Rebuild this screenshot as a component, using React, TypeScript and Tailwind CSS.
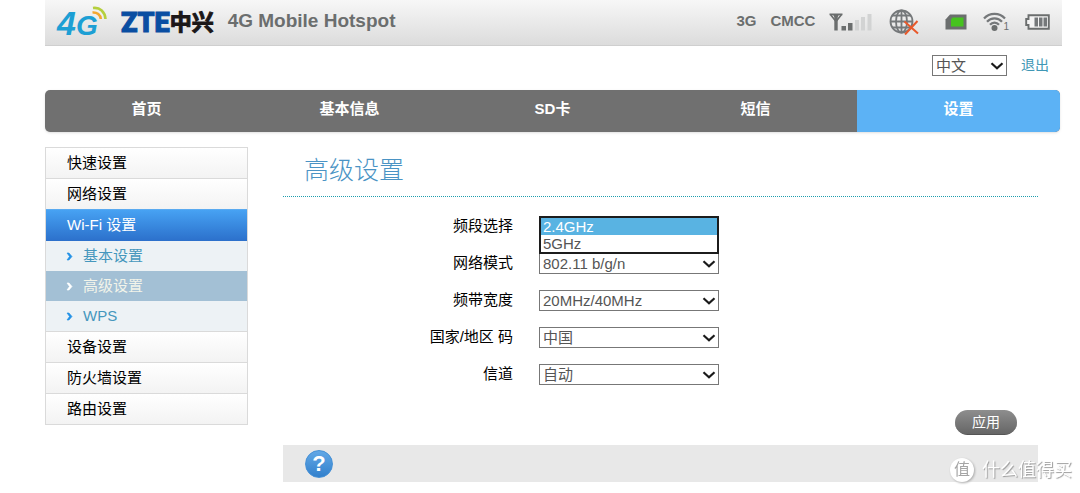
import React, { useState } from 'react';
import clsx from 'clsx';

interface MenuItem {
  label: string;
  children?: string[];
}

interface Field {
  id: string;
  label: string;
  options: string[];
}

const NAV = ['首页', '基本信息', 'SD卡', '短信', '设置'];

const MENU: MenuItem[] = [
  { label: '快速设置' },
  { label: '网络设置' },
  { label: 'Wi-Fi 设置', children: ['基本设置', '高级设置', 'WPS'] },
  { label: '设备设置' },
  { label: '防火墙设置' },
  { label: '路由设置' },
];

const BANDS = ['2.4GHz', '5GHz'];

const FIELDS: Field[] = [
  { id: 'mode', label: '网络模式', options: ['802.11 b/g/n', '802.11 n'] },
  { id: 'bandwidth', label: '频带宽度', options: ['20MHz/40MHz', '20MHz'] },
  { id: 'country', label: '国家/地区 码', options: ['中国'] },
  { id: 'channel', label: '信道', options: ['自动'] },
];

const SelectArrow: React.FC = () => (
  <svg viewBox="0 0 14 8" className="absolute right-[3px] top-[7px] w-[14px] h-2 pointer-events-none" aria-hidden="true">
    <path d="M1.5 1.2 L7 6.3 L12.5 1.2" fill="none" stroke="#1a1a1a" strokeWidth="2.2" />
  </svg>
);

const SignalIcon: React.FC = () => (
  <svg viewBox="0 0 44 18" className="w-11 h-[18px]" aria-label="信号">
    <path d="M0.500 1.300 H13.500 M1.200 1.200 L7 8.500 L12.800 1.200 M4.500 1.200 L7 4.500 L9.500 1.200" fill="none" stroke="#6b6e6e" strokeWidth="1.700" />
    <path d="M7 1 V17.500" stroke="#6b6e6e" strokeWidth="3.400" />
    <path d="M12.500 13h4.500v4.500h-4.500z M19 10h4.500v7.500h-4.500z" fill="#6b6e6e" />
    <path d="M26 7h4v10.500h-4z M32 4h4v13.500h-4z M38.500 1h4v16.500h-4z" fill="#d2d3d3" />
  </svg>
);

const GlobeIcon: React.FC = () => (
  <svg viewBox="0 0 30 26" className="w-[30px] h-[26px]" aria-label="网络未连接">
    <g fill="none" stroke="#75787a" strokeWidth="1.800">
      <circle cx="12.500" cy="12.500" r="11" />
      <ellipse cx="12.500" cy="12.500" rx="5.500" ry="11" />
      <path d="M12.500 1.500v22 M1.500 12.500h22 M3.200 6.500h18.600 M3.200 18.500h18.600" />
    </g>
    <path d="M15.500 12.500 L29 24.500 M28.500 12 L16 25.500" stroke="#e8592b" strokeWidth="2" />
  </svg>
);

const SimIcon: React.FC = () => (
  <svg viewBox="0 0 22 16" className="w-[22px] h-4" aria-label="SIM卡">
    <path d="M5 0.500 H21.500 V15.500 H0.500 V5.500 Z" fill="#6b6e6e" />
    <path d="M7.500 3.500 H18.500 V12.500 H6 V5.500 Z" fill="#46c31f" />
  </svg>
);

const WifiIcon: React.FC = () => (
  <svg viewBox="0 0 24 20" className="w-6 h-5" aria-label="Wi-Fi">
    <g fill="none" stroke="#75787a" strokeWidth="2.200">
      <path d="M1 6.500 C6.500 0.300 16.500 0.300 22 6.500" />
      <path d="M4 9.800 C8 5.200 15 5.200 19 9.800" />
      <path d="M7 12.800 C9.500 9.800 13.500 9.800 16 12.800" />
    </g>
    <circle cx="11.500" cy="16" r="3" fill="#6b6e6e" />
  </svg>
);

const BatteryIcon: React.FC = () => (
  <svg viewBox="0 0 25 16" className="w-[25px] h-4" aria-label="电量">
    <path d="M3.500 1.200 H23.800 V14.800 H3.500 V11 H1.200 V5 H3.500 Z" fill="#f4f4f4" stroke="#6b6e6e" strokeWidth="1.900" />
    <path d="M9.500 3.500h3.500v9h-3.500z M14 3.500h3.500v9h-3.500z M18.500 3.500h3.500v9h-3.500z" fill="#75787a" />
  </svg>
);

const Header: React.FC = () => (
  <header className="flex items-center h-[46px] bg-linear-to-b from-[#f7f7f7] to-[#dcdcdc] border-b border-[#cfcfcf] text-[#6b6e6e] font-bold">
    <div className="relative ml-3 w-[50px] pt-1 text-[28px] leading-[34px] italic text-[#1d9fd4]">
      <span className="text-[34px]">4</span>
      <span>G</span>
      <svg viewBox="0 0 16 16" className="absolute right-0 top-1 w-4 h-4" aria-hidden="true">
        <path d="M2 2 C9 1 14 6 14.500 13" fill="none" stroke="#b5cf3d" strokeWidth="2.600" />
        <path d="M1.500 6.500 C6 6 9.500 9 9.800 13" fill="none" stroke="#f3a72f" strokeWidth="2.600" />
      </svg>
    </div>
    <div className="flex items-center ml-[14px] leading-[34px]">
      <span className="font-['Roboto',sans-serif] font-black text-[27px] text-[#0a4ea2] [-webkit-text-stroke:1px_#0a4ea2]">ZTE</span>
      <span className="text-[22px] text-[#1b1718] [-webkit-text-stroke:1px_#1b1718]">中兴</span>
    </div>
    <h1 className="ml-[14px] pb-[2px] text-[19px] whitespace-nowrap">4G Mobile Hotspot</h1>
    <div className="flex items-center ml-auto mr-3 pb-[2px] text-[15px]">
      <span>3G</span>
      <span className="ml-[14px] mr-[14px]">CMCC</span>
      <SignalIcon />
      <span className="ml-4 mr-[26px]"><GlobeIcon /></span>
      <SimIcon />
      <span className="flex items-end ml-4 mr-4">
        <WifiIcon />
        <span className="-ml-1 text-[10px] leading-[10px] font-normal">1</span>
      </span>
      <BatteryIcon />
    </div>
  </header>
);

const Sidebar: React.FC<{ page: string; onSelect: (page: string) => void }> = ({ page, onSelect }) => (
  <aside className="w-[203px] shrink-0 self-start border-x border-b border-[#dadada]">
    {MENU.map((item) => (
      <React.Fragment key={item.label}>
        <a
          href="#"
          className={clsx(
            'block pl-[21px] leading-[29px] border-t bg-linear-to-b',
            item.children
              ? 'h-8 border-[#5aaaf0] from-[#47a2f3] to-[#2c70cb] text-white'
              : 'h-[31px] border-[#dadada] from-white to-[#f3f3f3] text-black'
          )}
        >
          {item.label}
        </a>
        {item.children?.map((child) => (
          <a
            key={child}
            href="#"
            onClick={() => onSelect(child)}
            className={clsx(
              'flex items-center gap-[10px] h-[30px] pl-[20px]',
              child === page ? 'bg-[#a3c0d5] text-[#f2f4ea]' : 'bg-[#edf2f5] text-[#4597bd]'
            )}
          >
            <svg
              viewBox="0 0 7 9"
              className={clsx('w-[7px] h-[9px]', child === page ? 'text-white' : 'text-[#2492e6]')}
              aria-hidden="true"
            >
              <path d="M1 1 H3 L6 4.500 L3 8 H1 L3.500 4.500 Z" fill="currentColor" stroke="currentColor" strokeWidth="0.600" />
            </svg>
            {child}
          </a>
        ))}
      </React.Fragment>
    ))}
  </aside>
);

const selectClass = 'block w-full h-[21px] pl-[3px] pr-5 leading-[19px] appearance-none bg-white border border-[#777] text-[#555] rounded-none';

const App: React.FC = () => {
  const [page, setPage] = useState('高级设置');
  const [band, setBand] = useState('2.4GHz');
  const [open, setOpen] = useState(true);

  const pickBand = (value: string) => {
    setBand(value);
    setOpen(false);
  };

  return (
    <div className="min-h-screen bg-white pl-[45px] pr-[18px] font-['Liberation_Sans','Noto_Sans_CJK_SC',sans-serif] text-[15px]">
      <Header />

      <div className="pr-[2px]">
        <div className="flex justify-end items-center gap-[14px] pt-[9px] pr-[11px]">
          <div className="relative w-[75px]">
            <select aria-label="语言" className={selectClass}>
              <option>中文</option>
              <option>English</option>
            </select>
            <SelectArrow />
          </div>
          <a href="#" className="text-sm leading-[21px] text-[#3f97b5]">退出</a>
        </div>

        <nav className="grid grid-cols-5 mt-[14px] h-[42px] rounded-[5px] overflow-hidden bg-[#707070] shadow-sm">
          {NAV.map((item) => (
            <a
              key={item}
              href="#"
              className={clsx('text-center font-bold text-white leading-[38px]', item === '设置' && 'bg-[#5cb2f5]')}
            >
              {item}
            </a>
          ))}
        </nav>

        <div className="flex mt-[15px]">
          <Sidebar page={page} onSelect={setPage} />

          <main className="flex-1 ml-[35px] mr-[22px]">
            <h2 className="h-[50px] pl-[21px] text-[25px] leading-[46px] font-light text-[#4a93c4] border-b border-dotted border-[#1f9dae]">
              {page}
            </h2>

            <form className="pt-[19px]" onSubmit={(e) => e.preventDefault()}>
              <div className="flex flex-col gap-4">
                <div className="flex items-start gap-[26px]">
                  <label htmlFor="band" className="w-[230px] text-right leading-[19px] text-black">频段选择</label>
                  <div className="relative w-[180px]">
                    <select id="band" value={band} onChange={(e) => pickBand(e.target.value)} className={selectClass}>
                      {BANDS.map((b) => <option key={b}>{b}</option>)}
                    </select>
                    <SelectArrow />
                    {open && (
                      <ul role="listbox" aria-label="频段选择" className="absolute left-0 top-0 z-10 w-full bg-white border-2 border-[#1c1c1c]">
                        {BANDS.map((b) => (
                          <li
                            key={b}
                            role="option"
                            aria-selected={b === band}
                            onClick={() => pickBand(b)}
                            className={clsx('pl-[2px] leading-[17px]', b === band ? 'bg-[#59b3e2] text-white' : 'text-[#555]')}
                          >
                            {b}
                          </li>
                        ))}
                      </ul>
                    )}
                  </div>
                </div>

                {FIELDS.map((field) => (
                  <div key={field.id} className="flex items-start gap-[26px]">
                    <label htmlFor={field.id} className="w-[230px] text-right leading-[19px] text-black">{field.label}</label>
                    <div className="relative w-[180px]">
                      <select id={field.id} className={selectClass}>
                        {field.options.map((o) => <option key={o}>{o}</option>)}
                      </select>
                      <SelectArrow />
                    </div>
                  </div>
                ))}
              </div>

              <div className="flex justify-end mt-[25px] pr-[21px]">
                <button
                  type="submit"
                  className="w-[62px] h-[25px] rounded-full bg-linear-to-b from-[#8e8e8e] to-[#666] border-b border-[#555] text-sm leading-[22px] text-white"
                >
                  应用
                </button>
              </div>
            </form>

            <div className="flex items-center h-[37px] mt-[10px] pl-[22px] bg-[#e8e8e8]">
              <button
                type="button"
                aria-label="帮助"
                className="w-7 h-7 rounded-full bg-linear-to-b from-[#62a8e6] to-[#3180cc] border border-[#4590d6] text-[22px] leading-[26px] font-bold text-white"
              >
                ?
              </button>
            </div>
          </main>
        </div>
      </div>

      <div className="fixed right-2 bottom-[10px] flex items-center gap-2 text-lg leading-[26px] text-white pointer-events-none">
        <span className="w-6 h-6 rounded-full bg-white text-center text-base leading-6 text-[#a5a5a5] drop-shadow-[1px_1px_1px_#aaa]">值</span>
        <span className="[text-shadow:1px_1px_1px_#999]">什么值得买</span>
      </div>
    </div>
  );
};

export default App;
